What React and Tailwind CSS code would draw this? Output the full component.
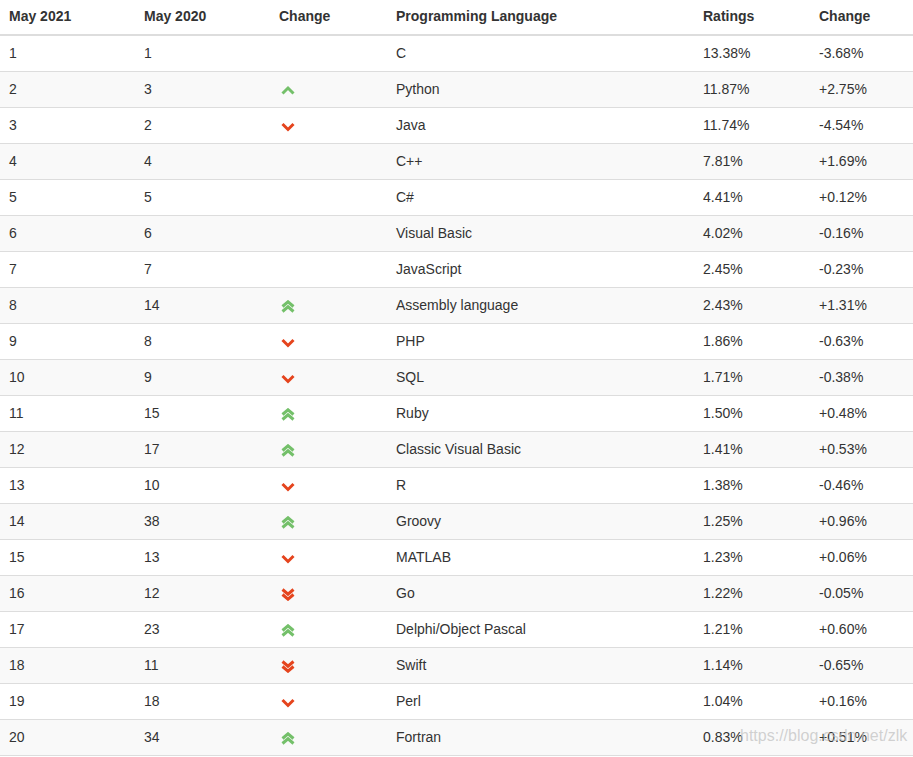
import React from 'react';

const ROWS = [
  [1, 1, null, 'C', '13.38%', '-3.68%'],
  [2, 3, 'up', 'Python', '11.87%', '+2.75%'],
  [3, 2, 'down', 'Java', '11.74%', '-4.54%'],
  [4, 4, null, 'C++', '7.81%', '+1.69%'],
  [5, 5, null, 'C#', '4.41%', '+0.12%'],
  [6, 6, null, 'Visual Basic', '4.02%', '-0.16%'],
  [7, 7, null, 'JavaScript', '2.45%', '-0.23%'],
  [8, 14, 'up2', 'Assembly language', '2.43%', '+1.31%'],
  [9, 8, 'down', 'PHP', '1.86%', '-0.63%'],
  [10, 9, 'down', 'SQL', '1.71%', '-0.38%'],
  [11, 15, 'up2', 'Ruby', '1.50%', '+0.48%'],
  [12, 17, 'up2', 'Classic Visual Basic', '1.41%', '+0.53%'],
  [13, 10, 'down', 'R', '1.38%', '-0.46%'],
  [14, 38, 'up2', 'Groovy', '1.25%', '+0.96%'],
  [15, 13, 'down', 'MATLAB', '1.23%', '+0.06%'],
  [16, 12, 'down2', 'Go', '1.22%', '-0.05%'],
  [17, 23, 'up2', 'Delphi/Object Pascal', '1.21%', '+0.60%'],
  [18, 11, 'down2', 'Swift', '1.14%', '-0.65%'],
  [19, 18, 'down', 'Perl', '1.04%', '+0.16%'],
  [20, 34, 'up2', 'Fortran', '0.83%', '+0.51%'],
];

const GRID = 'grid grid-cols-[136px_135px_117px_307px_116px_102px]';

const Arrow = ({ kind }) => {
  if (!kind) return null;
  const up = kind.startsWith('up');
  const double = kind.endsWith('2');
  const color = up ? '#74c06a' : '#e5441d';
  let d;
  if (double) {
    d = up
      ? 'M1.5 6.5 L7 1.8 L12.5 6.5 M1.5 11.5 L7 6.8 L12.5 11.5'
      : 'M1.5 1.5 L7 6.2 L12.5 1.5 M1.5 6.5 L7 11.2 L12.5 6.5';
  } else {
    d = up ? 'M1.5 9.5 L7 4 L12.5 9.5' : 'M1.5 4 L7 9.5 L12.5 4';
  }
  return (
    <svg width="14" height="13" viewBox="0 0 14 13" className="ml-[2px] mt-[2px]">
      <path d={d} fill="none" stroke={color} strokeWidth="3" strokeLinejoin="miter" />
    </svg>
  );
};

export default function App() {
  return (
    <div className="relative w-[913px] bg-white text-[14px] text-[#333] font-['Liberation_Sans',Arial,sans-serif]">
      <div className={`${GRID} h-[36px] border-b-2 border-[#ddd] font-bold`}>
        {['May 2021', 'May 2020', 'Change', 'Programming Language', 'Ratings', 'Change'].map((h, i) => (
          <div key={i} className={`${i === 0 ? 'pl-[9px]' : 'pl-[8px]'} pr-2 pt-[6px] leading-5`}>{h}</div>
        ))}
      </div>
      {ROWS.map((r, idx) => (
        <div key={r[0]} className={`${GRID} h-[36px] border-b border-[#ddd] ${idx % 2 === 1 ? 'bg-[#f9f9f9]' : 'bg-white'}`}>
          <div className="pl-[9px] pr-2 flex items-center">{r[0]}</div>
          <div className="pl-[8px] pr-2 flex items-center">{r[1]}</div>
          <div className="pl-[8px] pr-2 flex items-center"><Arrow kind={r[2]} /></div>
          <div className="pl-[8px] pr-2 flex items-center">{r[3]}</div>
          <div className="pl-[8px] pr-2 flex items-center">{r[4]}</div>
          <div className="pl-[8px] pr-2 flex items-center">{r[5]}</div>
        </div>
      ))}
      <div className="absolute left-[740px] bottom-[10px] text-[16px] leading-5 text-[rgba(190,190,190,0.7)] pointer-events-none">
        https://blog.csdn.net/zlk
      </div>
    </div>
  );
}
